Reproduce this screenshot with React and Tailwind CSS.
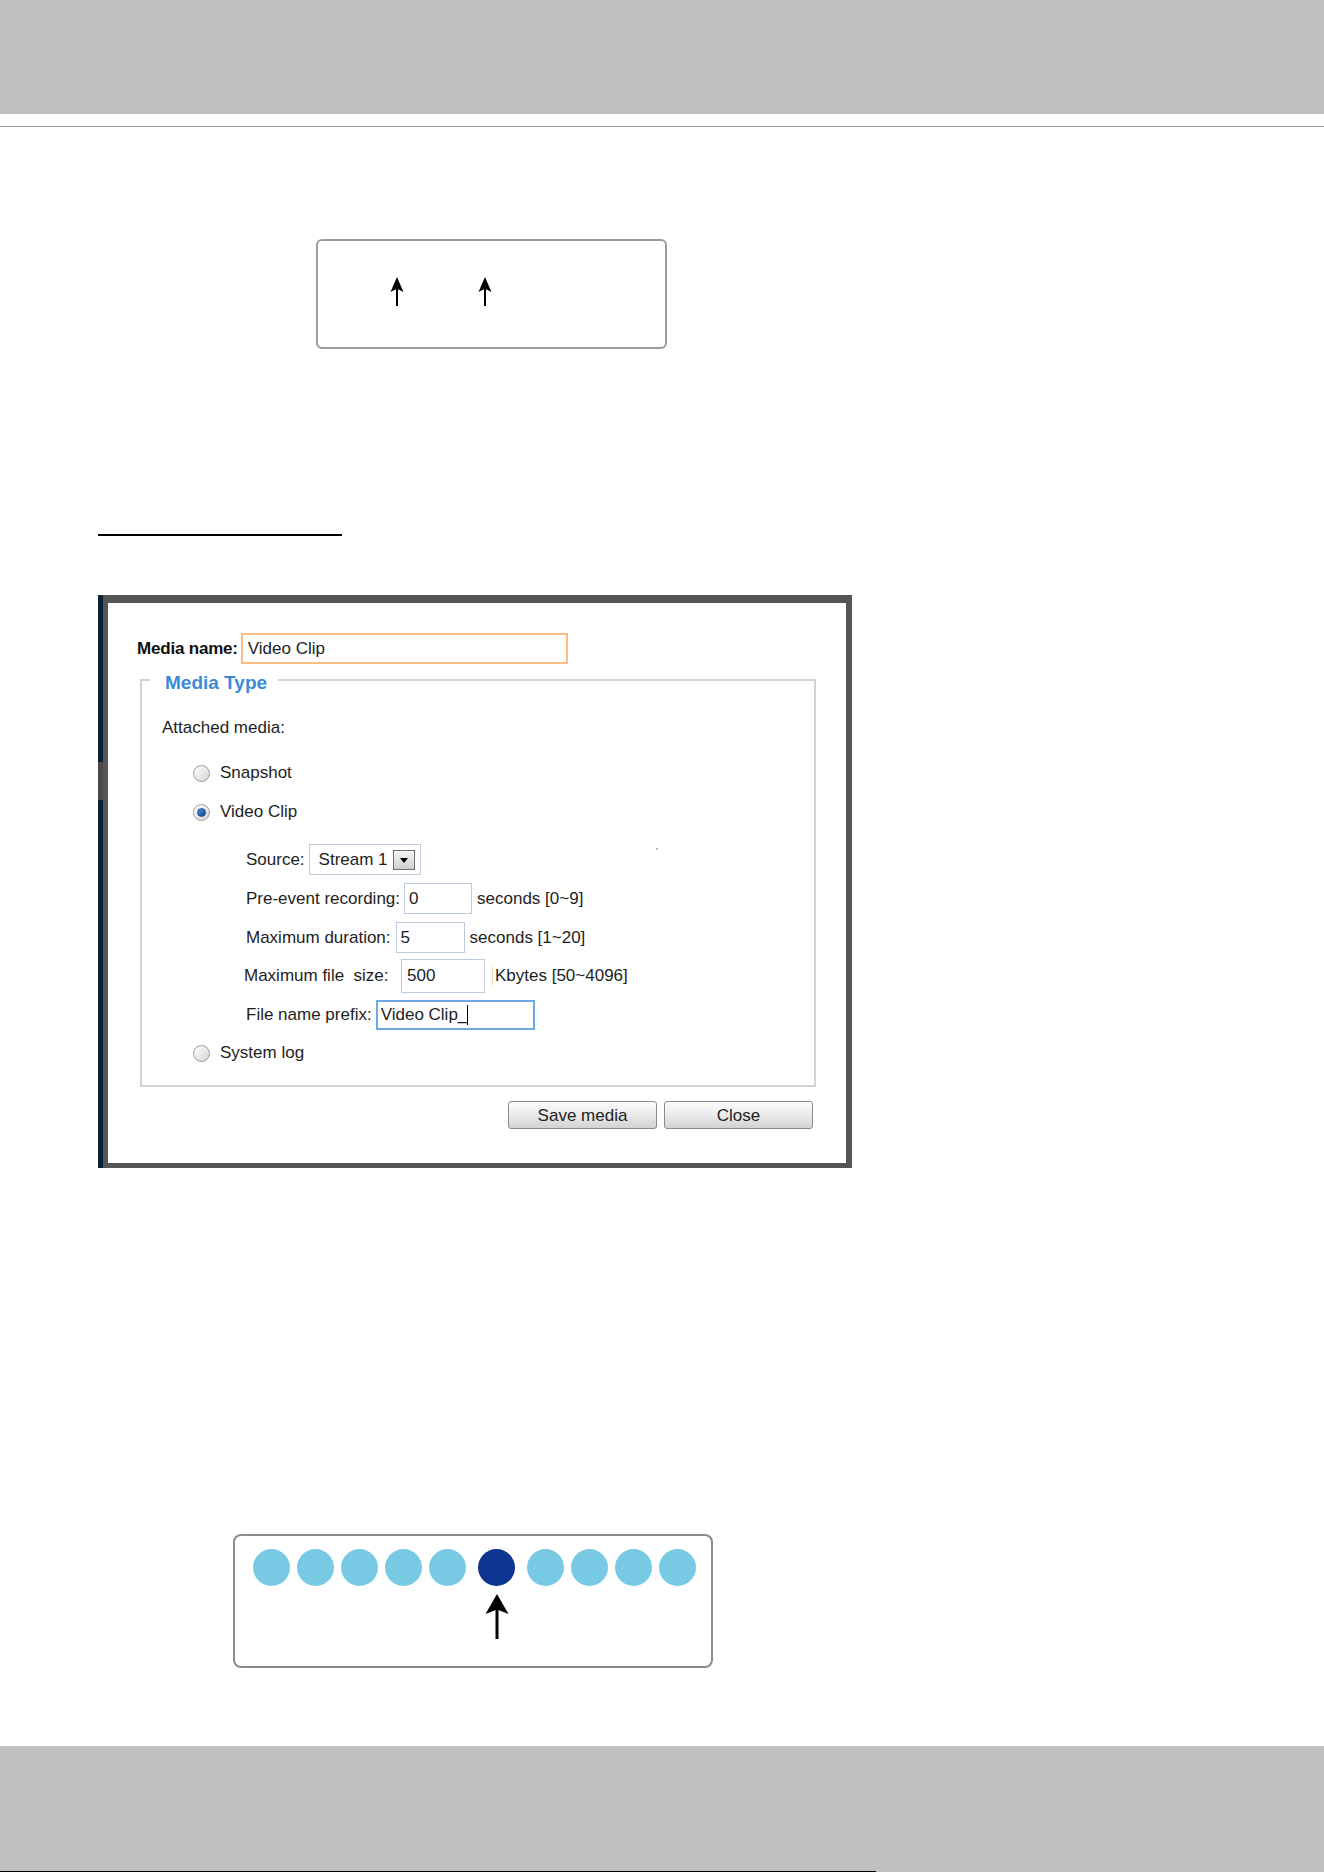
import React from 'react';

function UpArrow({ w = 14, h = 29, head = 15, stroke = 2 }) {
  const c = w / 2;
  return (
    <svg width={w} height={h} viewBox={`0 0 ${w} ${h}`} className="block">
      <path d={`M${c} 0 L${w - 0.5} ${head} L${c} ${head * 0.78} L0.5 ${head} Z`} fill="#000" />
      <rect x={c - stroke / 2} y={head * 0.7} width={stroke} height={h - head * 0.7} fill="#000" />
    </svg>
  );
}

function Radio({ checked }) {
  return (
    <span className="w-[17px] h-[17px] rounded-full border border-[#9b9b9b] bg-gradient-to-br from-[#ffffff] to-[#d4d4d4] flex items-center justify-center shrink-0">
      {checked && (
        <span className="w-[9px] h-[9px] rounded-full bg-gradient-to-br from-[#5d93da] to-[#123f8c] border border-[#1c4c99]" />
      )}
    </span>
  );
}

function TextBox({ w, h = 31, value, border = 'border-[#bccadd]', pad = 'pl-[5px]' }) {
  return (
    <div className={`${w} flex items-center border ${border} bg-white ${pad}`} style={{ height: h }}>
      {value}
    </div>
  );
}

function Btn({ children }) {
  return (
    <button className="w-[149px] h-[28px] rounded-[3px] border border-[#8a8a8a] bg-gradient-to-b from-[#fbfbfb] via-[#ebebeb] to-[#d2d2d2] text-[17px] text-[#222] leading-none">
      {children}
    </button>
  );
}

export default function App() {
  const dots = [0, 1, 2, 3, 4, 5, 6, 7, 8, 9];

  return (
    <div className="w-[1324px] h-[1872px] bg-white flex flex-col overflow-hidden" style={{ fontFamily: '"Liberation Sans", Arial, sans-serif' }}>
      {/* top band */}
      <div className="h-[114px] bg-[#bfc0bf] shrink-0" />
      <div className="mt-[12px] h-px bg-[#9d9d9d] shrink-0" />

      {/* first diagram box */}
      <div className="mt-[112px] ml-[316px] w-[351px] h-[110px] border-2 border-[#9c9c9c] rounded-[6px] shrink-0">
        <div className="flex pt-[36px] pl-[72px] gap-[74px]">
          <UpArrow />
          <UpArrow />
        </div>
      </div>

      {/* underline */}
      <div className="mt-[185px] ml-[98px] w-[244px] h-[2px] bg-black shrink-0" />

      {/* dialog screenshot */}
      <div className="mt-[59px] ml-[98px] w-[754px] h-[573px] flex shrink-0">
        <div className="w-[5px] flex flex-col">
          <div className="h-[167px] bg-[#0d2236]" />
          <div className="h-[38px] bg-[#4b4b4b]" />
          <div className="flex-1 bg-[#0d2236]" />
        </div>
        <div className="flex-1 border-t-[8px] border-l-[5px] border-r-[6px] border-b-[5px] border-[#555555] bg-white flex flex-col text-[17px] text-[#1e1e1e]">
          <div className="mt-[30px] pl-[29px] flex items-center h-[31px]">
            <span className="font-bold text-[#111] tracking-[-0.2px]">Media name:</span>
            <div className="ml-[3px]">
              <TextBox w="w-[327px]" value="Video Clip" border="border-2 border-[#fbbd83]" />
            </div>
          </div>

          <div className="relative mt-[15px] ml-[32px] w-[676px] border-2 border-[#d6d3ce] pb-[17px]">
            <span className="absolute left-[8px] -top-[9px] bg-white pl-[15px] pr-[11px] text-[19px] leading-[22px] font-bold text-[#3b8ad8]">
              Media Type
            </span>
            <span className="absolute left-[514px] top-[167px] w-[2px] h-[2px] bg-[#bbb]" />

            <div className="mt-[32px] pl-[20px] h-[30px] flex items-center">Attached media:</div>

            <div className="mt-[15px] ml-[51px] h-[30px] flex items-center gap-[10px]">
              <Radio />
              <span>Snapshot</span>
            </div>
            <div className="mt-[9px] ml-[51px] h-[30px] flex items-center gap-[10px]">
              <Radio checked />
              <span>Video Clip</span>
            </div>

            <div className="mt-[17px] ml-[104px] h-[31px] flex items-center gap-[4px]">
              <span>Source:</span>
              <div className="w-[112px] h-[31px] border border-[#bccadd] flex items-center justify-between pl-[9px] pr-[5px]">
                <span>Stream 1</span>
                <span className="w-[22px] h-[20px] border border-[#6f6f6f] bg-gradient-to-b from-[#f4f4f4] to-[#cfcfcf] flex items-center justify-center">
                  <span className="w-0 h-0 border-l-[4px] border-r-[4px] border-t-[5px] border-l-transparent border-r-transparent border-t-black mt-[2px]" />
                </span>
              </div>
            </div>

            <div className="mt-[8px] ml-[104px] h-[31px] flex items-center gap-[4px]">
              <span>Pre-event recording:</span>
              <TextBox w="w-[68px]" value="0" pad="pl-[4px]" />
              <span className="ml-[1px]">seconds [0~9]</span>
            </div>

            <div className="mt-[8px] ml-[104px] h-[31px] flex items-center gap-[5px]">
              <span>Maximum duration:</span>
              <TextBox w="w-[69px]" value="5" pad="pl-[4px]" />
              <span>seconds [1~20]</span>
            </div>

            <div className="mt-[6px] ml-[102px] h-[34px] flex items-center gap-[7px]">
              <span className="w-[150px] whitespace-nowrap">Maximum file&nbsp; size:</span>
              <TextBox w="w-[84px]" h={34} value="500" pad="pl-[5px]" />
              <span className="flex items-center gap-[2px]">
                <span className="w-px h-[18px] bg-[#f3d5a2]" />
                <span>Kbytes [50~4096]</span>
              </span>
            </div>

            <div className="mt-[7px] ml-[104px] h-[30px] flex items-center gap-[4px]">
              <span>File name prefix:</span>
              <TextBox
                w="w-[159px]"
                h={30}
                border="border-2 border-[#6ea9df]"
                pad="pl-[3px]"
                value={
                  <span className="flex items-center">
                    Video Clip_<span className="w-px h-[20px] bg-black" />
                  </span>
                }
              />
            </div>

            <div className="mt-[8px] ml-[51px] h-[30px] flex items-center gap-[10px]">
              <Radio />
              <span>System log</span>
            </div>
          </div>

          <div className="mt-[14px] flex justify-end gap-[7px] pr-[33px]">
            <Btn>Save media</Btn>
            <Btn>Close</Btn>
          </div>
        </div>
      </div>

      {/* second diagram box */}
      <div className="mt-[366px] ml-[233px] w-[480px] h-[134px] border-2 border-[#8c8c8c] rounded-[8px] shrink-0">
        <div className="flex pt-[13px] pl-[18px] gap-[7px]">
          {dots.map(i => (
            <span
              key={i}
              className={`w-[37px] h-[37px] rounded-full shrink-0 ${i === 5 ? 'bg-[#0b3590] mx-[5px]' : 'bg-[#78c9e4]'}`}
            />
          ))}
        </div>
        <div className="mt-[8px] pl-[250px]">
          <UpArrow w={24} h={45} head={20} stroke={3} />
        </div>
      </div>

      {/* bottom band */}
      <div className="mt-[78px] flex-1 bg-[#bfc0bf] flex flex-col justify-end">
        <div className="w-[876px] h-px bg-black" />
      </div>
    </div>
  );
}
